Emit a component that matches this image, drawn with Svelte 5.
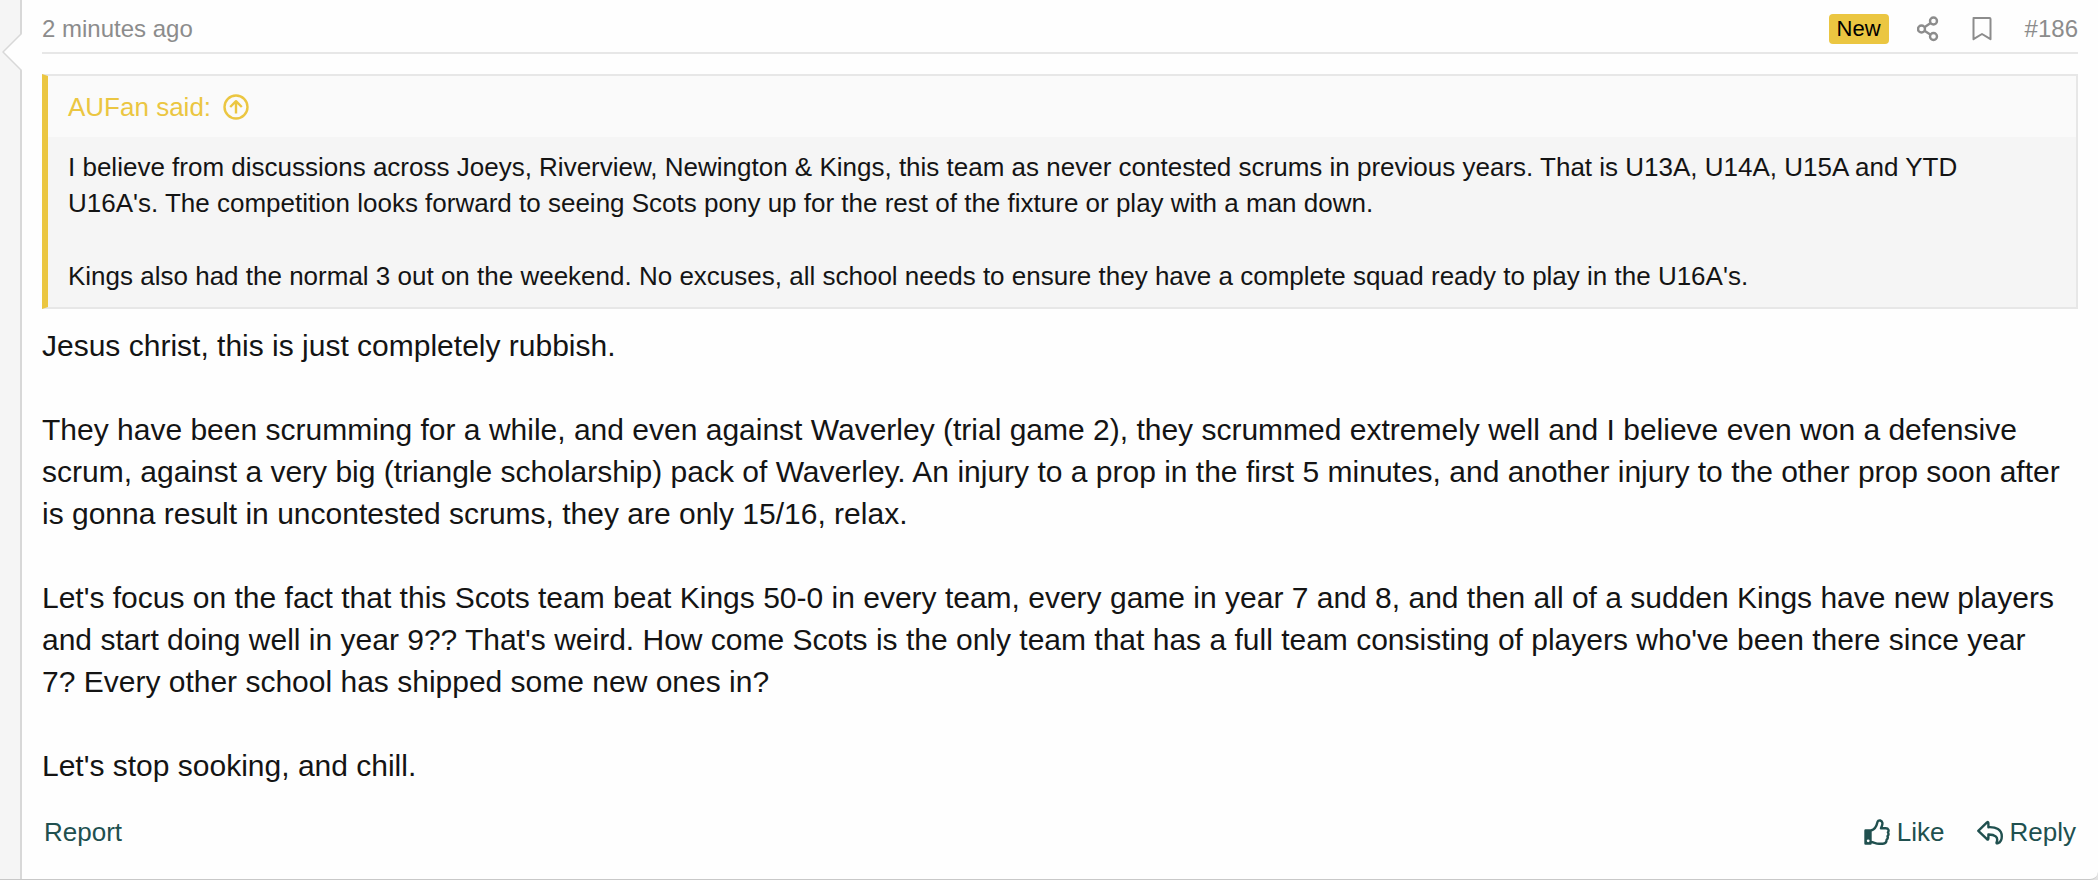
<script lang="ts">
    let bookmarked: boolean = false;
    let liked: boolean = false;

    const quote: string[] = [
        "I believe from discussions across Joeys, Riverview, Newington & Kings, this team as never contested scrums in previous years. That is U13A, U14A, U15A and YTD\nU16A's. The competition looks forward to seeing Scots pony up for the rest of the fixture or play with a man down.",
        "Kings also had the normal 3 out on the weekend. No excuses, all school needs to ensure they have a complete squad ready to play in the U16A's.",
    ];

    const message: string[] = [
        "Jesus christ, this is just completely rubbish.",
        "They have been scrumming for a while, and even against Waverley (trial game 2), they scrummed extremely well and I believe even won a defensive scrum, against a very big (triangle scholarship) pack of Waverley. An injury to a prop in the first 5 minutes, and another injury to the other prop soon after is gonna result in uncontested scrums, they are only 15/16, relax.",
        "Let's focus on the fact that this Scots team beat Kings 50-0 in every team, every game in year 7 and 8, and then all of a sudden Kings have new players and start doing well in year 9?? That's weird. How come Scots is the only team that has a full team consisting of players who've been there since year\n7? Every other school has shipped some new ones in?",
        "Let's stop sooking, and chill.",
    ];
</script>

<article class="post">
    <div class="user-cell">
        <svg class="arrow" viewBox="0 0 20 38" aria-hidden="true">
            <path class="arrow-fill" d="M20 0.5 L1 19 L20 37.5 Z" />
            <path class="arrow-line" d="M19.5 0.5 L1 19 L19.5 37.5" />
        </svg>
    </div>

    <div class="main-cell">
        <header>
            <a class="muted" href="#post-186"><time>2 minutes ago</time></a>
            <div class="attribution">
                <span class="new-badge">New</span>
                <a class="muted icon-link" href="#share" aria-label="Share">
                    <svg class="share" viewBox="0 0 22 26">
                        <circle cx="4.5" cy="13" r="3.5" />
                        <circle cx="16.5" cy="5" r="3.5" />
                        <circle cx="16.5" cy="20.5" r="3.5" />
                        <path d="M7.5 11.2 L13.6 7 M7.5 14.8 L13.6 18.7" />
                    </svg>
                </a>
                <button
                    class="muted icon-link"
                    aria-label="Add bookmark"
                    aria-pressed={bookmarked}
                    on:click={() => (bookmarked = !bookmarked)}
                >
                    <svg class="bookmark" viewBox="0 0 20 26">
                        <path d="M1.5 2 H17.5 Q18.5 2 18.5 3 V23.2 L10 18 L1.5 23.2 V3 Q1.5 2 2.5 2 Z" />
                    </svg>
                </button>
                <a class="muted" href="#post-186">#186</a>
            </div>
        </header>

        <blockquote>
            <a class="quote-title" href="#post-185">
                AUFan said:
                <svg viewBox="0 0 26 26" aria-hidden="true">
                    <circle cx="13" cy="13" r="11.5" />
                    <path d="M13 19.5 V7.5 M7.2 13 L13 7.2 L18.8 13" />
                </svg>
            </a>
            <div class="quote-content">
                {#each quote as text}
                    <p>{text}</p>
                {/each}
            </div>
        </blockquote>

        <div class="message">
            {#each message as text}
                <p>{text}</p>
            {/each}
        </div>

        <footer>
            <a href="#report">Report</a>
            <div class="actions">
                <button aria-pressed={liked} on:click={() => (liked = !liked)}>
                    <svg viewBox="0 0 26 26" aria-hidden="true">
                        <path class="solid" d="M1.5 11.5 H6.5 V24.5 H1.5 Z" />
                        <path d="M7 11.5 C10 10.5 12.5 7.5 13.2 4 C13.6 1.8 14.8 1.2 16.3 1.5 C18.8 2.2 18.8 5 17.8 7.2 L17 9.3 H21.8 C24.6 9.3 25.2 11.8 23.9 13.3 C24.7 14.6 24.6 16.2 23.5 17.2 C24.1 18.6 23.6 20 22.6 20.8 C22.6 23.4 21.2 24.6 18.8 24.8 H15 C12 24.8 10 23.4 7 23" />
                        <circle class="dot" cx="4.2" cy="21.8" r="1.4" />
                    </svg>
                    Like
                </button>
                <a href="#reply">
                    <svg viewBox="0 0 26 26" aria-hidden="true">
                        <path d="M1.3 11.8 L10 3.4 Q11.4 2.4 11.4 4.4 V8.2 C19 7.8 24.8 10.4 24.8 17.4 C24.8 20.6 23.3 23.2 21 24.2 C19.6 24.8 19.2 24 19.8 22.8 C21.4 18.2 18 15.4 11.4 15.5 V19.2 Q11.4 21.2 10 20.2 Z" />
                    </svg>
                    Reply
                </a>
            </div>
        </footer>
    </div>
</article>

<style>
    :global(body) {
        margin: 0;
        background: #e3e3e3;
    }
    .post {
        display: flex;
        box-sizing: border-box;
        min-height: 100vh;
        border-bottom: 1px solid #c8c8c8;
        border-bottom-right-radius: 8px;
        background: #fefefe;
        color: #141414;
        font-family: "Helvetica Neue", "Liberation Sans", Arial, sans-serif;
        font-size: 30px;
        line-height: 42px;
    }
    .user-cell {
        position: relative;
        flex: none;
        width: 20px;
        background: #f5f5f5;
        border-right: 2px solid #d8d8d8;
    }
    svg {
        fill: none;
        stroke: currentColor;
        stroke-width: 2;
        stroke-linejoin: round;
    }
    /* points from the message back to its author */
    .arrow {
        position: absolute;
        top: 33px;
        right: -2px;
        width: 20px;
        height: 38px;
    }
    .arrow-fill {
        fill: #fefefe;
        stroke: none;
    }
    .arrow-line {
        stroke: #d8d8d8;
        stroke-width: 1.5;
    }
    .main-cell {
        flex: 1;
        min-width: 0;
        padding: 6px 20px 0;
    }
    header {
        display: flex;
        justify-content: space-between;
        align-items: center;
        height: 46px;
        border-bottom: 2px solid #e7e7e7;
        font-size: 24px;
    }
    a,
    button {
        color: #20504f;
        text-decoration: none;
    }
    button {
        padding: 0;
        border: 0;
        background: none;
        font: inherit;
        cursor: pointer;
    }
    .muted {
        color: #8c8c8c;
    }
    .attribution {
        display: flex;
        align-items: center;
        gap: 28px;
    }
    .new-badge {
        padding: 0 8px;
        border-radius: 4px;
        background: #ebc641;
        color: #000;
        font-size: 22px;
        line-height: 30px;
    }
    .icon-link {
        display: flex;
    }
    .share {
        width: 22px;
        height: 26px;
    }
    .bookmark {
        width: 20px;
        height: 26px;
        margin: 0 5px;
    }
    blockquote {
        margin: 20px 0 16px;
        border: 2px solid #e7e7e7;
        border-left: 6px solid #ebc641;
        background: #f5f5f5;
        font-size: 26px;
        line-height: 36px;
    }
    .quote-title {
        display: flex;
        align-items: center;
        gap: 12px;
        padding: 13px 20px 12px;
        background: #fafafa;
        color: #ebc641;
    }
    .quote-title svg {
        width: 26px;
        height: 26px;
    }
    .quote-content {
        padding: 12px 20px 13px;
    }
    p {
        margin: 0;
        white-space: pre-line;
    }
    .quote-content p + p {
        margin-top: 37px;
    }
    .message p + p {
        margin-top: 42px;
    }
    footer {
        display: flex;
        justify-content: space-between;
        padding: 27px 2px 0;
        font-size: 26px;
        line-height: 36px;
    }
    .actions {
        display: flex;
        gap: 32px;
    }
    .actions a,
    .actions button {
        display: flex;
        align-items: center;
        gap: 7px;
    }
    .actions svg {
        width: 26px;
        height: 26px;
    }
    .solid {
        fill: currentColor;
    }
    .dot {
        fill: #fefefe;
        stroke: none;
    }
    .share,
    .quote-title svg,
    .actions svg {
        stroke-width: 2.4;
    }
</style>
